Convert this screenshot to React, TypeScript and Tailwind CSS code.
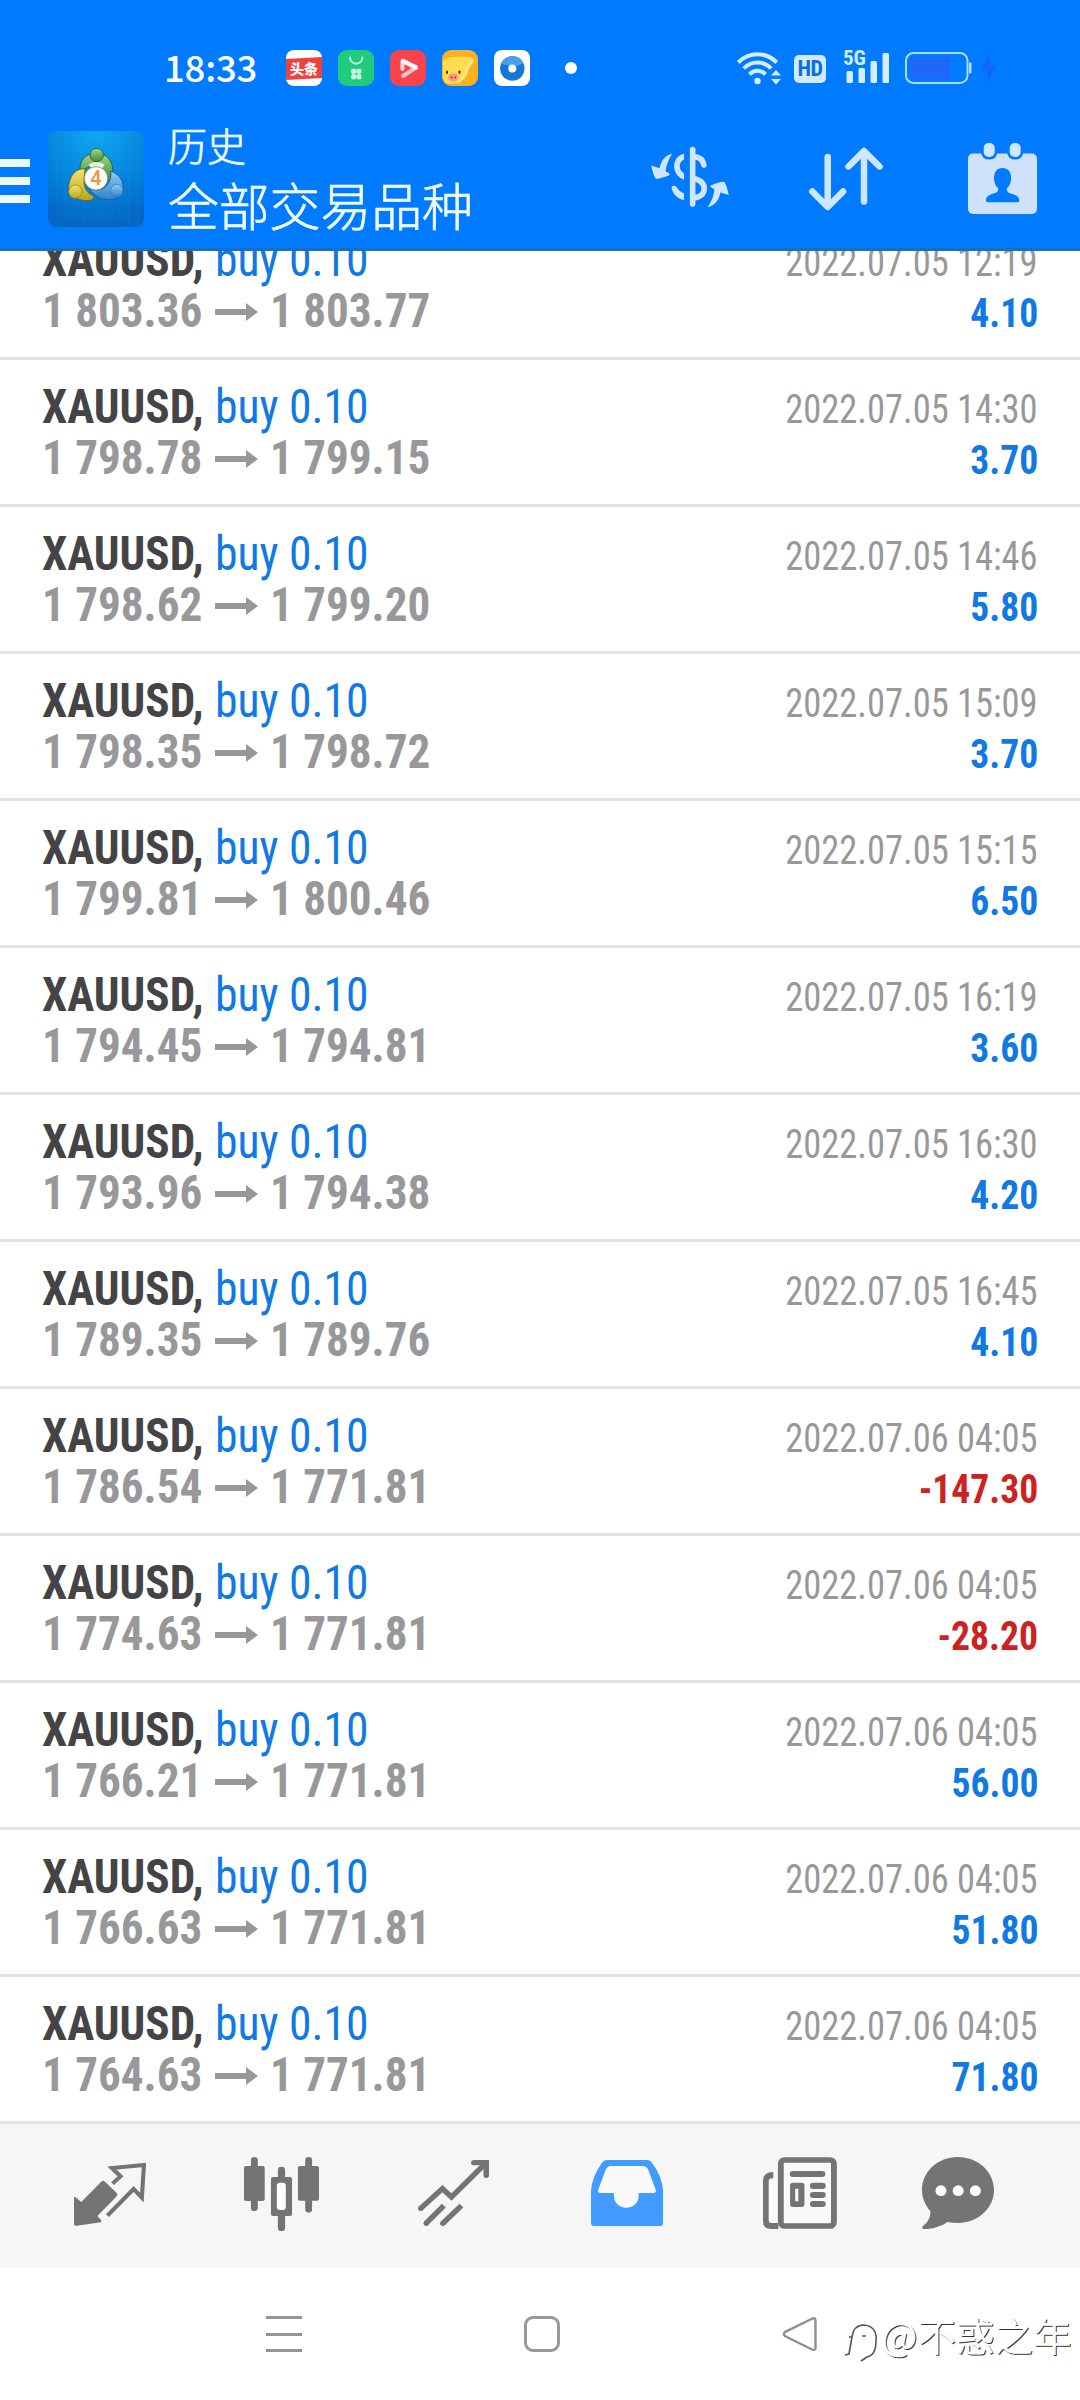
import type { ReactNode } from "react";

/* ---------- Types ---------- */
type Deal = { open: string; close: string; time: string; profit: string };
type IconProps = { box: string; className: string; children: ReactNode };

/* ---------- Data ---------- */
const deals: Deal[] = [
  { open: "1 803.36", close: "1 803.77", time: "2022.07.05 12:19", profit: "4.10" },
  { open: "1 798.78", close: "1 799.15", time: "2022.07.05 14:30", profit: "3.70" },
  { open: "1 798.62", close: "1 799.20", time: "2022.07.05 14:46", profit: "5.80" },
  { open: "1 798.35", close: "1 798.72", time: "2022.07.05 15:09", profit: "3.70" },
  { open: "1 799.81", close: "1 800.46", time: "2022.07.05 15:15", profit: "6.50" },
  { open: "1 794.45", close: "1 794.81", time: "2022.07.05 16:19", profit: "3.60" },
  { open: "1 793.96", close: "1 794.38", time: "2022.07.05 16:30", profit: "4.20" },
  { open: "1 789.35", close: "1 789.76", time: "2022.07.05 16:45", profit: "4.10" },
  { open: "1 786.54", close: "1 771.81", time: "2022.07.06 04:05", profit: "-147.30" },
  { open: "1 774.63", close: "1 771.81", time: "2022.07.06 04:05", profit: "-28.20" },
  { open: "1 766.21", close: "1 771.81", time: "2022.07.06 04:05", profit: "56.00" },
  { open: "1 766.63", close: "1 771.81", time: "2022.07.06 04:05", profit: "51.80" },
  { open: "1 764.63", close: "1 771.81", time: "2022.07.06 04:05", profit: "71.80" },
];

/* ---------- Icons ---------- */
function Icon({ box, className, children }: IconProps) {
  return (
    <svg viewBox={box} preserveAspectRatio="none" className={`block shrink-0 overflow-visible ${className}`}>
      {children}
    </svg>
  );
}

function AppIcons() {
  return (
    <div className="flex gap-4">
      <div className="relative flex size-9 items-center justify-center overflow-hidden rounded-lg bg-white">
        <div className="absolute -inset-x-1 top-[8px] h-[21px] -rotate-3 bg-[#f0403f]" />
        <span className="relative font-['Noto_Sans_CJK_SC',sans-serif] text-[14px] leading-none font-black text-white">头条</span>
      </div>
      <Icon box="0 0 36 36" className="size-9">
        <rect width="36" height="36" rx="9" fill="#1fcb7c" />
        <path d="M12 7.500a6.200 6.200 0 0 0 12.400 0" fill="none" stroke="#c9f7dd" strokeWidth="1.900" strokeLinecap="round" />
        <g fill="#c9f7dd">
          <circle cx="15.700" cy="21.300" r="2.700" />
          <circle cx="20.900" cy="21.300" r="2.700" />
          <circle cx="15.700" cy="26.700" r="2.700" />
          <circle cx="20.900" cy="26.700" r="2.700" />
        </g>
      </Icon>
      <Icon box="0 0 36 36" className="size-9">
        <rect width="36" height="36" rx="9" fill="#fb434b" />
        <path d="M12.500 11.500V19" stroke="#ffd9da" strokeWidth="4" strokeLinecap="round" />
        <path d="M13 26l13-8.500" stroke="#ffc4c6" strokeWidth="4" strokeLinecap="round" />
        <path d="M13 11l13 6.500" stroke="#fff" strokeWidth="4.200" strokeLinecap="round" />
      </Icon>
      <Icon box="0 0 36 36" className="size-9">
        <rect width="36" height="36" rx="9" fill="#fcb022" />
        <path d="M1 11C6 5 20 7 29 7c5 1 3 6 0 9-4 4-2 10-8 14-4 3-9 4-14 4-4-1-6-4-6-8z" fill="#ffdc50" />
        <path d="M30 9c0 5-5 7-6 12s-4 9-9 12" fill="none" stroke="#ffe98a" strokeWidth="2" />
        <rect x="4" y="20.500" width="2" height="3.600" rx="1" fill="#5b2b16" />
        <rect x="16.500" y="20.500" width="2" height="3.600" rx="1" fill="#5b2b16" />
        <ellipse cx="11.300" cy="27.500" rx="5.200" ry="4" fill="#ff9686" />
        <circle cx="9.600" cy="27.500" r="1" fill="#b9342c" />
        <circle cx="13.300" cy="27.500" r="1" fill="#b9342c" />
      </Icon>
      <Icon box="0 0 36 36" className="size-9">
        <rect width="36" height="36" rx="8" fill="#fff" />
        <circle cx="18.300" cy="18.500" r="12.200" fill="#1577d3" />
        <path d="M7 14a12.200 12.200 0 0 1 22.500-1c-6 5-16 2-22.500 1z" fill="#48a0ea" />
        <circle cx="18.300" cy="18.500" r="4" fill="#fff" />
      </Icon>
    </div>
  );
}

function StatusIcons() {
  return (
    <div className="flex items-start">
      <Icon box="0 0 44 33" className="h-[33px] w-[44px]">
        <g fill="none" stroke="#d2eeff" strokeWidth="4">
          <path d="M1.300 11.500a26.500 26.500 0 0 1 38.400 0" />
          <path d="M6.800 17.500a18.800 18.800 0 0 1 27.400 0" />
          <path d="M12.500 23.300a11 11 0 0 1 16 0" />
        </g>
        <circle cx="20.500" cy="30" r="3.200" fill="#d2eeff" />
        <path d="M34 24.500l5-5.500 5 5.500zM34 28l5 5.500 5-5.500z" fill="#d2eeff" />
      </Icon>
      <div className="mt-1 ml-[13px] flex h-7 w-8 items-center justify-center rounded-[5px] bg-[#d2e9ff] font-['Roboto_Condensed',sans-serif] text-[22px] leading-none font-bold tracking-[-0.5px] text-[#0a6fe4]">
        HD
      </div>
      <div className="relative ml-[17px] h-8 w-[46px]">
        <span className="absolute -top-[3px] left-0 font-['Roboto_Condensed',sans-serif] text-[21px] leading-none font-bold text-[#d2eeff]">
          5G
        </span>
        <Icon box="0 0 46 32" className="h-8 w-[46px]">
          <g fill="#d2eeff">
            <rect x="3.500" y="20" width="6.500" height="12" rx="1.500" />
            <rect x="15.500" y="17" width="6.500" height="15" rx="1.500" />
            <rect x="27.500" y="10" width="6.500" height="22" rx="1.500" />
            <rect x="39.500" y="2" width="6.500" height="30" rx="1.500" />
          </g>
        </Icon>
      </div>
      <Icon box="0 0 96 33" className="ml-4 h-[33px] w-[96px]">
        <rect x="1" y="2" width="61.500" height="30" rx="7.500" fill="none" stroke="#a9dcff" strokeWidth="2" />
        <rect x="5" y="6" width="40" height="22" rx="3" fill="#1f66fb" />
        <rect x="64" y="11.500" width="2.500" height="11" rx="1" fill="#a9dcff" />
        <path d="M84 2L76 20h7l-1 12 10-18h-7z" fill="#1764fb" />
      </Icon>
    </div>
  );
}

function Logo() {
  return (
    <Icon box="24 18 288 288" className="size-24">
      <defs>
        <radialGradient id="sky" cx=".5" cy="0" r="1">
          <stop offset="0" stopColor="#0fa9f2" />
          <stop offset=".55" stopColor="#0484dc" />
          <stop offset="1" stopColor="#0466c2" />
        </radialGradient>
        <linearGradient id="green" x1="0" y1="0" x2="0" y2="1">
          <stop offset="0" stopColor="#a5d68f" />
          <stop offset="1" stopColor="#3b8f3a" />
        </linearGradient>
        <linearGradient id="yellow" x1="0" y1="0" x2="0" y2="1">
          <stop offset="0" stopColor="#f5e36a" />
          <stop offset="1" stopColor="#b9a51c" />
        </linearGradient>
        <linearGradient id="blue" x1="0" y1="0" x2="0" y2="1">
          <stop offset="0" stopColor="#8fcdf5" />
          <stop offset="1" stopColor="#2d83cc" />
        </linearGradient>
      </defs>
      <rect x="24" y="18" width="288" height="288" rx="24" fill="url(#sky)" />
      <path
        d="M50 18v288M77 18v288M104 18v288M131 18v288M158 18v288M185 18v288M212 18v288M239 18v288M266 18v288M293 18v288M24 48h288M24 75h288M24 102h288M24 129h288M24 156h288M24 183h288M24 210h288M24 237h288M24 264h288"
        stroke="#4fc0f5"
        strokeOpacity=".14"
        strokeWidth="2"
      />
      <path d="M120 140c-4-36 20-56 50-56s52 26 48 62c-2 18-12 26-24 20-4-20-8-36-24-44-20 0-34 8-50 18z" fill="url(#green)" stroke="#23662c" strokeWidth="3" />
      <path d="M136 132c-34-4-52 30-50 64 6 22 40 34 64 30 12-4 14-10 8-14-16-8-26-22-26-42 0-16 2-26 4-38z" fill="url(#yellow)" stroke="#6d6a1c" strokeWidth="3" />
      <path d="M212 138c30 10 42 36 36 62-8 24-44 30-70 18-16-8-26-18-30-30 20 12 40 6 52-6 10-12 14-26 12-44z" fill="url(#blue)" stroke="#1c5c9c" strokeWidth="3" />
      <path d="M146 120c10-12 38-12 48 0l-8 10h-32z" fill="#e6f4dc" />
      <circle cx="170" cy="90" r="20" fill="url(#green)" stroke="#2b6e2b" strokeWidth="3" />
      <circle cx="106" cy="200" r="20" fill="url(#yellow)" stroke="#8a7d1a" strokeWidth="2" />
      <circle cx="230" cy="197" r="19" fill="url(#blue)" stroke="#2a70b2" strokeWidth="2" />
      <circle cx="168" cy="160" r="35" fill="#fffdf9" stroke="#7b7b52" strokeWidth="2" />
      <text x="168" y="181" textAnchor="middle" fontFamily="Roboto" fontSize="60" fontWeight="500" fill="#f2953a">
        4
      </text>
    </Icon>
  );
}

function HeaderActions() {
  return (
    <div className="flex items-start">
      {/* currency */}
      <Icon box="32 36 236 181" className="mt-1 h-[60px] w-[78px]">
        <g fill="#cfe6ff">
          <path d="M96 56C76 60 62 76 58 100l-25-8q4 24 12 38 3 3 8 2 18-4 34-11 3-3 0-5l-11-7C78 92 84 74 96 56z" />
          <path d="M96 56C76 60 62 76 58 100l-25-8q4 24 12 38 3 3 8 2 18-4 34-11 3-3 0-5l-11-7C78 92 84 74 96 56z" transform="rotate(180 150 136.500)" />
          <path d="M132 56c-20 4-30 19-30 38 0 18 11 34 30 41v-19c-9-7-13-13-13-22s4-15 13-20z" />
        </g>
        <g fill="none" stroke="#cfe6ff" strokeWidth="17" strokeLinecap="round">
          <path d="M158 44v164" />
          <path d="M162 65c16 1 27 10 30 25" />
          <path d="M160 130c20 5 33 16 33 31 0 17-13 27-33 29" />
        </g>
        <path d="M94 156c5-5 13-4 17 3 4 8 11 13 21 17v20c-19-3-36-18-38-40z" fill="#cfe6ff" />
      </Icon>
      {/* sort */}
      <Icon box="0 0 74 64" className="mt-1 ml-20 h-16 w-[74px]">
        <g fill="none" stroke="#cfe6ff" strokeWidth="6.500" strokeLinecap="round" strokeLinejoin="round">
          <path d="M18.700 10v49.500M3.300 44.500l15.400 15.500 15.400-15.500" />
          <path d="M55 54.500V4.500M39.500 19.500L55 4l15.500 15.500" />
        </g>
      </Icon>
      {/* calendar */}
      <Icon box="0 0 69 71" className="ml-[85px] h-[71px] w-[69px]">
        <rect y="10.500" width="69" height="60.500" rx="5" fill="#cfe2fb" />
        <rect x="13.200" y="-2" width="16" height="18.500" rx="7" fill="#007bff" />
        <rect x="39.200" y="-2" width="16" height="18.500" rx="7" fill="#007bff" />
        <rect x="15.700" y="0" width="11" height="14" rx="5" fill="#cfe6ff" />
        <rect x="41.700" y="0" width="11" height="14" rx="5" fill="#cfe6ff" />
        <path d="M34.500 25c5.500 0 8.800 4 8.600 10.500-.2 5-2 8-4.300 10 0 3 1.200 4.200 5 5.300 5 1.500 7.500 3 7.500 7.200-.3 1-1 1.200-2 1.200H20c-1.200 0-1.800-.6-2-1.500 0-4 2.500-5.700 7.500-7.200 3.600-1 4.800-2.200 4.800-5-2.300-2-4-5-4.300-10C26 29 29 25 34.500 25z" fill="#007bff" />
      </Icon>
    </div>
  );
}

/* ---------- Sections ---------- */
function Header() {
  return (
    <header className="z-10 h-[251px] shrink-0 border-b-[3px] border-[#1a6dbf] bg-[#007bff] pt-[50px]">
      <div className="flex h-[77px] items-start pl-[164px]">
        <div className="w-[122px] pt-[3px] font-['Noto_Sans_CJK_SC',sans-serif] text-[36.500px] leading-[28px] font-medium tracking-[-0.2px] text-white">
          18:33
        </div>
        <AppIcons />
        <div className="mt-[12px] ml-[35px] size-3 rounded-full bg-white" />
        <div className="mt-px ml-[160px]">
          <StatusIcons />
        </div>
      </div>
      <div className="flex items-start">
        <div className="mt-8 flex w-[30px] flex-col gap-[10px]">
          <div className="h-2 bg-[#ecfaff]" />
          <div className="h-2 bg-[#ecfaff]" />
          <div className="h-2 bg-[#ecfaff]" />
        </div>
        <div className="mt-1 ml-[18px]">
          <Logo />
        </div>
        <div className="-mt-[3px] ml-[24px] w-[483px] font-['Noto_Sans_CJK_SC',sans-serif] font-light text-[#f0fbff] [-webkit-text-stroke:0.7px_#f0fbff]">
          <div className="text-[39px] leading-[40px]">历史</div>
          <div className="mt-[11px] text-[50.800px] leading-[58px]">全部交易品种</div>
        </div>
        <div className="mt-4">
          <HeaderActions />
        </div>
      </div>
    </header>
  );
}

function DealRow({ deal }: { deal: Deal }) {
  const loss = deal.profit.startsWith("-");
  return (
    <div className="h-[147px] shrink-0 border-b-[3px] border-[#e4e4e4] px-[42px] pt-[21px] leading-[51px] whitespace-nowrap">
      <div className="flex h-[51px] items-baseline text-[48px]">
        <span className="w-[173px] origin-left scale-x-[0.94] font-bold text-[#444446]">XAUUSD,</span>
        <span className="origin-left scale-x-[0.95] text-[#1079e4]">buy 0.10</span>
        <span className="ml-auto origin-right scale-x-[0.912] text-[40px] text-[#98989b]">{deal.time}</span>
      </div>
      <div className="flex h-[51px] items-baseline text-[48px] font-bold text-[#98989b]">
        <span className="w-[173px] origin-left scale-x-[0.94]">{deal.open}</span>
        <Icon box="0 0 43 18" className="mb-[6px] h-[18px] w-[43px] -translate-y-[6px]">
          <path d="M0 6h31V0l12 9-12 9v-6H0z" fill="#98989b" />
        </Icon>
        <span className="ml-[12px] origin-left scale-x-[0.94]">{deal.close}</span>
        <span className={`ml-auto origin-right scale-x-[0.94] text-[40px] ${loss ? "text-[#cc2222]" : "text-[#1079e4]"}`}>{deal.profit}</span>
      </div>
    </div>
  );
}

function TabBar() {
  return (
    <nav className="flex h-[144px] shrink-0 items-start bg-[#f6f6f6] pl-[74px] text-[#747474]">
      {/* quotes */}
      <Icon box="215 159 209 189" className="mt-[39px] h-[63px] w-[72px]">
        <path d="M215 262q2-2 5 0l16 14 58-61q6-5 11 0l34 34q4 5 0 10l-56 59 11 13q3 4-2 6l-69 10q-8 0-8-6z" fill="currentColor" />
        <path d="M327 221l23-22-25-25 93-9-6 98-24-26-76 80" fill="none" stroke="currentColor" strokeWidth="12" />
      </Icon>
      {/* charts */}
      <Icon box="709 141 217 222" className="mt-[33px] ml-[98px] h-[74px] w-[75px]">
        <g fill="currentColor">
          <rect x="729" y="141" width="20" height="162" rx="10" />
          <rect x="709" y="168" width="60" height="105" rx="6" />
          <rect x="886" y="141" width="20" height="167" rx="10" />
          <rect x="865" y="168" width="61" height="104" rx="6" />
          <rect x="807" y="170" width="21" height="193" rx="10" />
          <rect x="787" y="201" width="61" height="117" rx="6" />
        </g>
        <rect x="804" y="218" width="26" height="82" rx="9" fill="#fff" />
      </Icon>
      {/* trade */}
      <Icon box="1214 150 206 198" className="mt-[36px] ml-[99px] h-[66px] w-[71px]">
        <g fill="none" stroke="currentColor" strokeWidth="16">
          <path d="M1221 296l64-60 26 25 96-98" />
          <path d="M1237 340l52-53M1286 340l54-53" />
          <path d="M1376 158h36v38" strokeLinecap="round" strokeLinejoin="round" />
        </g>
        <path d="M1385 150h35v35z" fill="currentColor" />
        <g fill="currentColor">
          <circle cx="1222" cy="295" r="8" />
          <circle cx="1238" cy="340" r="8" />
          <circle cx="1286" cy="340" r="8" />
        </g>
      </Icon>
      {/* history */}
      <Icon box="147 150 210 198" className="mt-[36px] ml-[102px] h-[66px] w-[72px]">
        <path d="M192 150h120q8 0 13 8 30 42 32 84v96q0 10-10 10H157q-10 0-10-10v-96q3-42 32-84 5-8 13-8z" fill="#429bff" />
        <path d="M205 168h92q12 0 17 11l22 61q1 9-7 9h-43v9c0 20-15 35-36 35s-36-15-36-35v-9h-40q-8-2-6-10l22-60q5-11 15-11z" fill="#fafafa" />
      </Icon>
      {/* news */}
      <Icon box="647 141 216 216" className="mt-[33px] ml-[100px] h-[72px] w-[74px]">
        <path d="M677 186v19q-13-2-13 8v117q0 9 8 9h20v18h-22q-23 0-23-23V212q0-26 30-26z" fill="currentColor" />
        <path d="M664 213v117q0 9 8 9h18V200z" fill="#fafafa" />
        <rect x="699" y="150" width="155" height="198" rx="11" fill="#fafafa" stroke="currentColor" strokeWidth="17" />
        <g fill="currentColor">
          <rect x="725" y="183" width="104" height="18" rx="9" />
          <rect x="726" y="218" width="42" height="73" rx="8" />
          <rect x="784" y="218" width="46" height="19" rx="9" />
          <rect x="784" y="246" width="46" height="18" rx="9" />
          <rect x="784" y="273" width="46" height="18" rx="9" />
        </g>
        <rect x="741" y="236" width="9" height="38" rx="2" fill="#fafafa" />
      </Icon>
      {/* messages */}
      <Icon box="1109 141 209 216" className="mt-[33px] ml-[85px] h-[72px] w-[72px]">
        <path d="M1213 141c58 0 105 44 105 99s-47 99-105 99c-10 0-20-1-30-3-18 13-42 21-66 21-8 0-10-5-5-9 14-11 23-28 21-45-15-18-24-39-24-63 0-55 46-99 104-99z" fill="currentColor" />
        <g fill="#fff">
          <circle cx="1164" cy="242" r="16" />
          <circle cx="1214" cy="242" r="16" />
          <circle cx="1264" cy="242" r="16" />
        </g>
      </Icon>
    </nav>
  );
}

function SystemBar() {
  return (
    <div className="flex flex-1 items-start bg-white pt-12 pl-[266px]">
      <div className="flex h-9 w-9 flex-col justify-between">
        <div className="h-[3px] bg-[#959595]" />
        <div className="h-[3px] bg-[#959595]" />
        <div className="h-[3px] bg-[#959595]" />
      </div>
      <div className="ml-[222px] size-9 rounded-[9px] border-[3px] border-[#999]" />
      <Icon box="0 0 35 36" className="ml-[222px] h-9 w-[35px]">
        <path d="M30.500 2.500L3.300 15.800q-3 2.200 0 4.400l27.200 13.500q3 .8 3-2V4.500q0-2.800-3-2z" fill="none" stroke="#8f8f8f" strokeWidth="2.400" />
      </Icon>
      <div className="mt-[-7px] ml-[28px] flex items-start text-white">
        <Icon box="0 0 32 40" className="mt-[14px] h-10 w-8">
          <path d="M4 14h3c1-8 5-12 12-12 10 1 13 8 12 16 0 11-4 15-9 16l-6 4M7 14L4 31l-4 1M17 13h4" fill="none" stroke="#555" strokeWidth="1.600" />
        </Icon>
        <span className="ml-[4px] font-['Noto_Sans_CJK_SC',sans-serif] text-[38.500px] leading-[50px] font-normal whitespace-nowrap [text-shadow:1px_1px_0.5px_#333]">
          @不惑之年
        </span>
      </div>
    </div>
  );
}

export default function App() {
  return (
    <div className="flex h-[2400px] w-[1080px] flex-col overflow-hidden bg-white font-['Roboto_Condensed',sans-serif]">
      <Header />
      {/* list is scrolled, so the first deal sits partly under the header */}
      <div className="flex h-[1873px] shrink-0 flex-col justify-end overflow-hidden">
        {deals.map((d, i) => (
          <DealRow key={i} deal={d} />
        ))}
      </div>
      <TabBar />
      <SystemBar />
    </div>
  );
}
